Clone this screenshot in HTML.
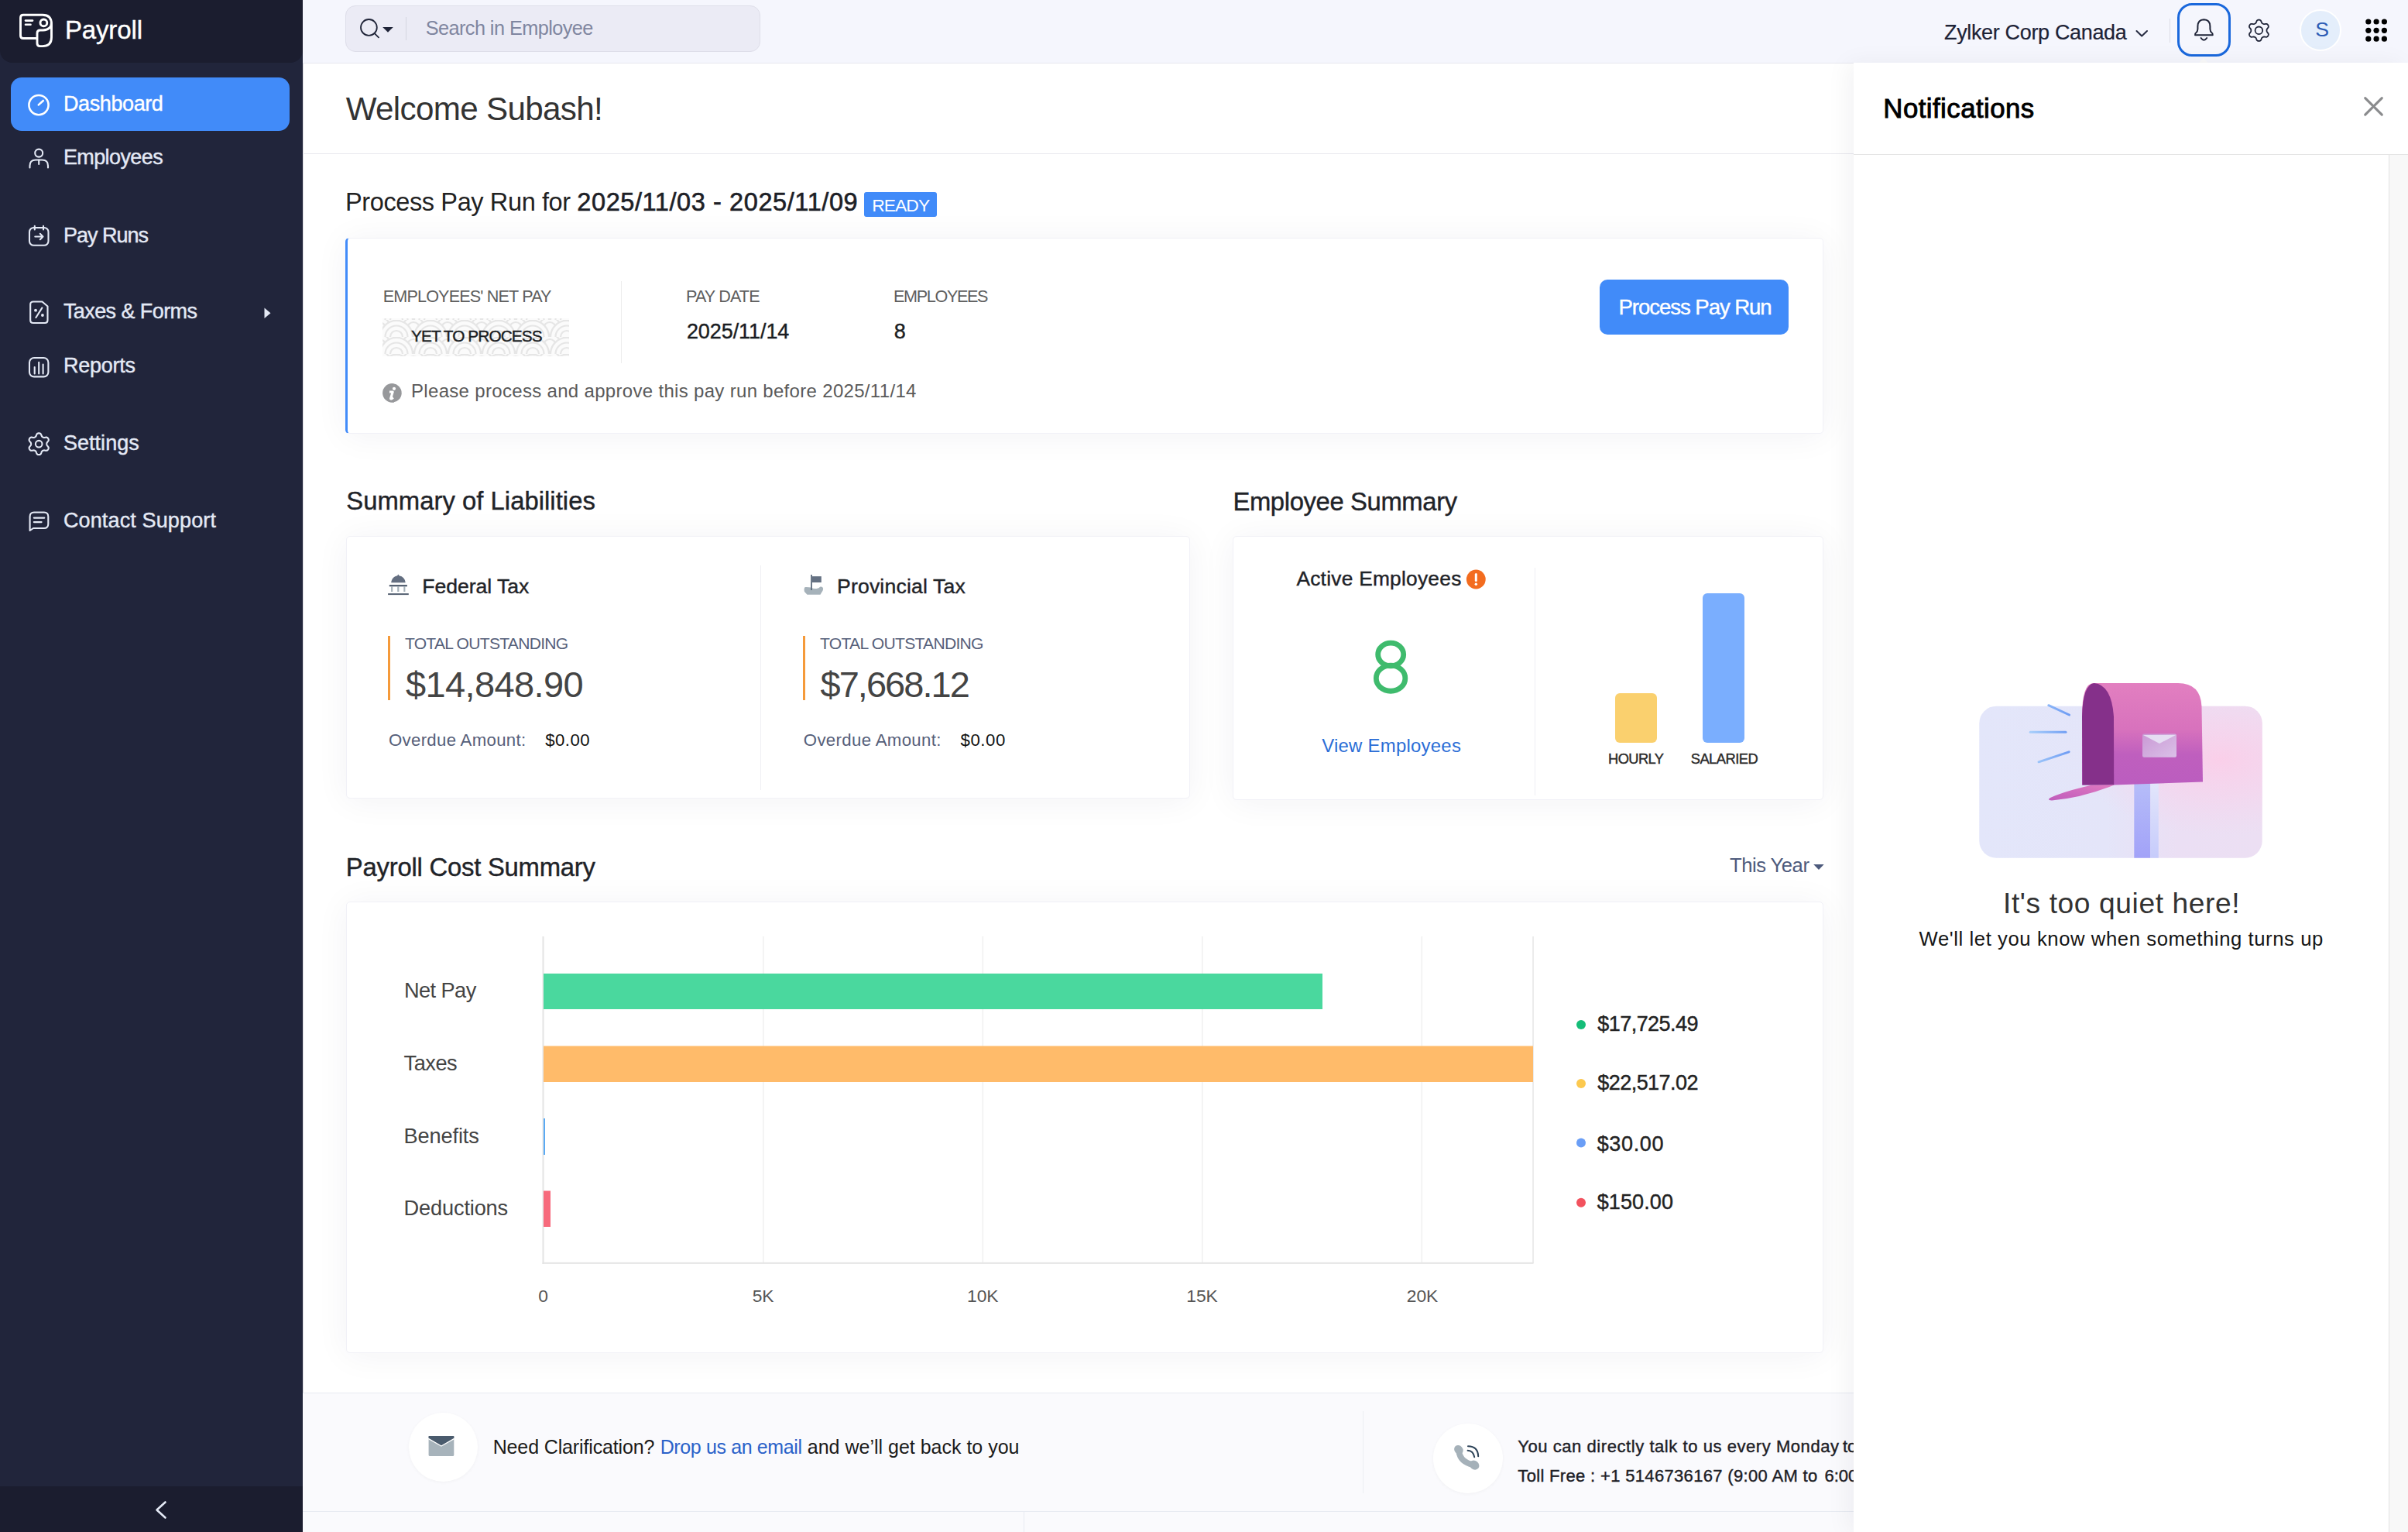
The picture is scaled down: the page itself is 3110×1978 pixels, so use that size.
<!DOCTYPE html>
<html><head><meta charset="utf-8"><title>Payroll Dashboard</title>
<style>
html,body{margin:0;padding:0;}
body{width:3110px;height:1978px;overflow:hidden;background:#ffffff;font-family:"Liberation Sans", sans-serif;}
#root{position:relative;width:3110px;height:1978px;overflow:hidden;}
.a{position:absolute;box-sizing:border-box;}
.t{position:absolute;white-space:nowrap;line-height:1;font-family:"Liberation Sans", sans-serif;}
svg{position:absolute;overflow:visible;}

</style></head><body>
<div id="root">
<!-- sidebar -->
<div class="a" style="left:0;top:0;width:391px;height:1978px;background:#21253b;"></div>
<div class="a" style="left:0;top:0;width:391px;height:81px;background:#1b1d2f;border-radius:0 0 16px 16px;"></div>
<div class="a" style="left:0;top:1919px;width:391px;height:59px;background:#1b1d2f;"></div>
<div class="a" style="left:14px;top:100px;width:360px;height:69px;background:#418bf9;border-radius:14px;"></div>

<div class="a" style="left:391px;top:81px;width:1px;height:1897px;background:#dcdce2;"></div>
<!-- header -->
<div class="a" style="left:391px;top:0;width:2719px;height:82px;background:#f5f6fd;border-bottom:1px solid #e7e8f0;"></div>
<div class="a" style="left:446px;top:7px;width:536px;height:60px;background:#ebebf5;border:1px solid #dedee9;border-radius:13px;"></div>
<div class="a" style="left:524px;top:22px;width:1px;height:30px;background:#d5d6e0;"></div>
<div class="a" style="left:2802px;top:24px;width:1px;height:31px;background:#dcdce6;"></div>
<div class="a" style="left:2812px;top:4px;width:69px;height:69px;border:3px solid #1a68dc;border-radius:19px;"></div>
<div class="a" style="left:2970px;top:12px;width:54px;height:54px;background:#e4eefb;border:2px solid #ffffff;border-radius:50%;"></div>

<!-- main welcome divider -->
<div class="a" style="left:391px;top:198px;width:2003px;height:1px;background:#e8e8ee;"></div>

<!-- READY badge -->
<div class="a" style="left:1116px;top:248px;width:94px;height:32px;background:#418bf9;border-radius:3px;"></div>

<!-- card 1 -->
<div class="a" style="left:446px;top:307px;width:1909px;height:253px;background:#fff;border-radius:5px;box-shadow:0 3px 44px rgba(30,40,80,0.055);border:1px solid #f1f1f7;border-left:3px solid #418bf9;"></div>
<svg style="left:494px;top:411px" width="241" height="49" viewBox="0 0 241 49">
  <defs>
    <pattern id="seig" width="44" height="22" patternUnits="userSpaceOnUse" x="-4" y="2">
      <rect width="44" height="22" fill="#fbfbfb"/>
      <g fill="#fbfbfb" stroke="#e6e6e6" stroke-width="2.2">
        <circle cx="22" cy="0" r="21"/><circle cx="22" cy="0" r="14.5"/><circle cx="22" cy="0" r="8"/>
        <circle cx="0" cy="11" r="21"/><circle cx="0" cy="11" r="14.5"/><circle cx="0" cy="11" r="8"/>
        <circle cx="44" cy="11" r="21"/><circle cx="44" cy="11" r="14.5"/><circle cx="44" cy="11" r="8"/>
        <circle cx="22" cy="22" r="21"/><circle cx="22" cy="22" r="14.5"/><circle cx="22" cy="22" r="8"/>
      </g>
    </pattern>
  </defs>
  <rect width="241" height="49" fill="url(#seig)"/>
</svg>
<div class="a" style="left:802px;top:363px;width:1px;height:106px;background:#ececec;"></div>
<div class="a" style="left:2066px;top:361px;width:244px;height:71px;background:#418bf9;border-radius:10px;"></div>

<!-- card 2 liabilities -->
<div class="a" style="left:447px;top:692px;width:1090px;height:339px;background:#fff;border-radius:5px;box-shadow:0 3px 44px rgba(30,40,80,0.055);border:1px solid #f1f1f7;"></div>
<div class="a" style="left:982px;top:730px;width:1px;height:290px;background:#efeff3;"></div>
<div class="a" style="left:501px;top:821px;width:3px;height:83px;background:#f59a3a;"></div>
<div class="a" style="left:1037px;top:821px;width:3px;height:83px;background:#f59a3a;"></div>

<!-- card 3 employee summary -->
<div class="a" style="left:1592px;top:692px;width:763px;height:341px;background:#fff;border-radius:5px;box-shadow:0 3px 44px rgba(30,40,80,0.055);border:1px solid #f1f1f7;"></div>
<div class="a" style="left:1982px;top:733px;width:1px;height:294px;background:#efeff3;"></div>
<div class="a" style="left:2086px;top:895px;width:54px;height:64px;background:#fad06e;border-radius:6px;"></div>
<div class="a" style="left:2199px;top:766px;width:54px;height:193px;background:#7aaefe;border-radius:6px;"></div>

<!-- card 4 payroll cost -->
<div class="a" style="left:447px;top:1164px;width:1908px;height:583px;background:#fff;border-radius:5px;box-shadow:0 3px 44px rgba(30,40,80,0.055);border:1px solid #f1f1f7;"></div>

<!-- footer -->
<div class="a" style="left:391px;top:1798px;width:2003px;height:180px;background:#fafafd;border-top:1px solid #e7ebf2;"></div>
<div class="a" style="left:391px;top:1951px;width:2003px;height:1px;background:#e7ebf2;"></div>
<div class="a" style="left:1322px;top:1951px;width:1px;height:27px;background:#e7ebf2;"></div>
<div class="a" style="left:1760px;top:1822px;width:1px;height:106px;background:#eceef3;"></div>
<div class="a" style="left:528px;top:1824px;width:89px;height:89px;background:#fff;border-radius:50%;box-shadow:0 1px 4px rgba(0,0,0,0.04);"></div>
<div class="a" style="left:1851px;top:1838px;width:90px;height:90px;background:#fff;border-radius:50%;box-shadow:0 1px 4px rgba(0,0,0,0.04);"></div>

<!-- chart -->
<svg style="left:0;top:0" width="3110" height="1978" viewBox="0 0 3110 1978">
  <g fill="#f0f0f0">
    <rect x="985" y="1209" width="1.5" height="422"/>
    <rect x="1268.6" y="1209" width="1.5" height="422"/>
    <rect x="1552" y="1209" width="1.5" height="422"/>
    <rect x="1835.6" y="1209" width="1.5" height="422"/>
    <rect x="1979.3" y="1209" width="1.5" height="422" fill="#e6e6e6"/>
  </g>
  <rect x="700.5" y="1209" width="2" height="423" fill="#e4e4e4"/>
  <rect x="700.5" y="1629.8" width="1280" height="2" fill="#e4e4e4"/>
  <rect x="702" y="1257" width="1006" height="46" fill="#4ad89e"/>
  <rect x="702" y="1350.5" width="1278" height="46.5" fill="#ffbb6a"/>
  <rect x="702" y="1444" width="2" height="47" fill="#5aaaf3"/>
  <rect x="702" y="1537.5" width="9" height="46.5" fill="#f76a7c"/>
  <circle cx="2042" cy="1323" r="6" fill="#15bd78"/>
  <circle cx="2042" cy="1399" r="6" fill="#fcc94f"/>
  <circle cx="2042" cy="1475.6" r="6" fill="#6a9ef6"/>
  <circle cx="2042" cy="1552.8" r="6" fill="#f2525e"/>
  <!-- This Year caret -->
  <path d="M2342.2 1116 L2355.7 1116 L2349 1123 Z" fill="#4d5a7c"/>
</svg>
<!-- icons -->
<svg style="left:0;top:0" width="3110" height="1978" viewBox="0 0 3110 1978">
 <g fill="none" stroke-linecap="round" stroke-linejoin="round">
  <!-- logo -->
  <g stroke="#ffffff" stroke-width="2.9">
    <path d="M47.5 49.5 H30 Q26.5 49.5 26.5 46 V23 Q26.5 19.3 30 19.3 H55 Q66.5 19.3 66.5 31 V48 Q66.5 59.6 55 59.6 H51.5 Q48 59.6 48 56 V43 Q48 39 52 39 H55.5 Q66.5 38.5 66.5 29"/>
    <circle cx="56.4" cy="29.4" r="4.4"/>
    <path d="M33 26.6 H42" stroke-width="2.6"/>
    <path d="M33 31.7 H39.5" stroke-width="2.6"/>
  </g>
  <!-- dashboard -->
  <g stroke="#ffffff" stroke-width="2.6">
    <circle cx="50" cy="135.6" r="12.6"/>
    <path d="M49.8 135.4 L55.8 130"/>
  </g>
  <g stroke="#e4e9f5" stroke-width="2.1">
    <!-- employees -->
    <circle cx="50.2" cy="197.6" r="5"/>
    <path d="M38.5 216.5 V214 Q38.5 206.5 46 206.5 H54.5 Q62 206.5 62 214 V216.5"/>
    <path d="M50.2 206.5 V212"/>
    <!-- pay runs -->
    <rect x="38" y="294" width="24.5" height="22.8" rx="5.5"/>
    <path d="M44.8 291.8 V296.5 M56 291.8 V296.5"/>
    <path d="M45.3 305.5 H55.5 M51.8 301.8 L55.5 305.5 L51.8 309.2"/>
    <!-- taxes & forms -->
    <path d="M43 389.5 H54.5 L61.5 395.5 V413.5 Q61.5 417 58 417 H43 Q39.2 417 39.2 413.5 V393 Q39.2 389.5 43 389.5 Z"/>
    <path d="M54.4 397.4 L46.4 410"/>
    <!-- reports -->
    <rect x="38" y="462" width="24.4" height="24.4" rx="6"/>
    <path d="M44.7 474 V482.4 M50.2 467.8 V482.4 M55.6 470.5 V482.4"/>
    <!-- settings gear -->
    <path d="M60.30 573.20 L60.31 573.64 L60.36 574.09 L60.49 574.55 L60.74 575.06 L61.19 575.64 L61.79 576.31 L62.36 577.03 L62.70 577.75 L62.79 578.41 L62.70 579.03 L62.51 579.61 L62.24 580.15 L61.90 580.66 L61.50 581.11 L61.01 581.49 L60.39 581.75 L59.60 581.81 L58.69 581.69 L57.80 581.50 L57.08 581.40 L56.52 581.43 L56.05 581.56 L55.64 581.74 L55.25 581.95 L54.87 582.18 L54.51 582.45 L54.17 582.78 L53.86 583.26 L53.58 583.93 L53.31 584.79 L52.96 585.64 L52.51 586.29 L51.98 586.71 L51.40 586.94 L50.81 587.06 L50.20 587.10 L49.59 587.06 L49.00 586.94 L48.42 586.71 L47.89 586.29 L47.44 585.64 L47.09 584.79 L46.82 583.93 L46.54 583.26 L46.23 582.78 L45.89 582.45 L45.53 582.18 L45.15 581.95 L44.76 581.74 L44.35 581.56 L43.88 581.43 L43.32 581.40 L42.60 581.50 L41.71 581.69 L40.80 581.81 L40.01 581.75 L39.39 581.49 L38.90 581.11 L38.50 580.66 L38.16 580.15 L37.89 579.61 L37.70 579.03 L37.61 578.41 L37.70 577.75 L38.04 577.03 L38.61 576.31 L39.21 575.64 L39.66 575.06 L39.91 574.55 L40.04 574.09 L40.09 573.64 L40.10 573.20 L40.09 572.76 L40.04 572.31 L39.91 571.85 L39.66 571.34 L39.21 570.76 L38.61 570.09 L38.04 569.37 L37.70 568.65 L37.61 567.99 L37.70 567.37 L37.89 566.79 L38.16 566.25 L38.50 565.74 L38.90 565.29 L39.39 564.91 L40.01 564.65 L40.80 564.59 L41.71 564.71 L42.60 564.90 L43.32 565.00 L43.88 564.97 L44.35 564.84 L44.76 564.66 L45.15 564.45 L45.53 564.22 L45.89 563.95 L46.23 563.62 L46.54 563.14 L46.82 562.47 L47.09 561.61 L47.44 560.76 L47.89 560.11 L48.42 559.69 L49.00 559.46 L49.59 559.34 L50.20 559.30 L50.81 559.34 L51.40 559.46 L51.98 559.69 L52.51 560.11 L52.96 560.76 L53.31 561.61 L53.58 562.47 L53.86 563.14 L54.17 563.62 L54.51 563.95 L54.87 564.22 L55.25 564.45 L55.64 564.66 L56.05 564.84 L56.52 564.97 L57.08 565.00 L57.80 564.90 L58.69 564.71 L59.60 564.59 L60.39 564.65 L61.01 564.91 L61.50 565.29 L61.90 565.74 L62.24 566.25 L62.51 566.79 L62.70 567.37 L62.79 567.99 L62.70 568.65 L62.36 569.37 L61.79 570.09 L61.19 570.76 L60.74 571.34 L60.49 571.85 L60.36 572.31 L60.31 572.76 Z"/>
    <circle cx="50.2" cy="573.2" r="4.3"/>
    <!-- contact support -->
    <path d="M38.6 685 V667 Q38.6 661.5 44 661.5 H57 Q62.3 661.5 62.3 667 V676.5 Q62.3 682 57 682 H43 Z"/>
    <path d="M43.8 668.6 H57.3 M43.8 674.1 H53.6"/>
  </g>
  <g fill="#e4e9f5" stroke="none">
    <circle cx="46" cy="400.7" r="1.9"/>
    <circle cx="54.9" cy="407" r="1.9"/>
    <path d="M341.5 397.5 L349.5 404.2 L341.5 411 Z"/>
  </g>
  <!-- sidebar collapse chevron -->
  <path d="M213.5 1939.5 L202.5 1949.5 L213.5 1959.5" stroke="#e4e9f5" stroke-width="2.6"/>

  <!-- search -->
  <g stroke="#1f2438" stroke-width="1.8">
    <circle cx="476.4" cy="35.4" r="10.4"/>
    <path d="M484 43.3 L489 48.3"/>
  </g>
  <path d="M494.2 35 H507.8 L501 41.8 Z" fill="#1f2438"/>
  <!-- company chevron -->
  <path d="M2759.5 40 L2766.2 46.5 L2773 40" stroke="#252a40" stroke-width="2"/>
  <path d="M2839 82.2 L2846 75.3 L2853 82.2 Z" fill="#fafafa" stroke="none"/>
  <!-- bell -->
  <g stroke="#1f2438" stroke-width="2">
    <path d="M2835 45.2 Q2834.5 43.5 2836.5 42 Q2838.2 40.6 2838.4 37.5 V34 Q2838.6 25.5 2846.4 25.3 Q2854.2 25.5 2854.4 34 V37.5 Q2854.6 40.6 2856.3 42 Q2858.3 43.5 2857.8 45.2 Z"/>
    <path d="M2842.6 49 Q2846.4 54.5 2850.2 49"/>
  </g>
  <!-- gear header -->
  <g stroke="#1f2438" stroke-width="1.8">
    <path d="M2927.50 39.30 L2927.51 39.74 L2927.56 40.19 L2927.67 40.65 L2927.91 41.15 L2928.33 41.72 L2928.89 42.38 L2929.42 43.09 L2929.74 43.79 L2929.82 44.44 L2929.73 45.05 L2929.53 45.62 L2929.26 46.15 L2928.94 46.65 L2928.54 47.10 L2928.06 47.48 L2927.46 47.74 L2926.69 47.82 L2925.81 47.71 L2924.96 47.55 L2924.26 47.47 L2923.71 47.52 L2923.25 47.65 L2922.84 47.84 L2922.45 48.05 L2922.07 48.28 L2921.71 48.54 L2921.36 48.87 L2921.05 49.33 L2920.77 49.98 L2920.48 50.79 L2920.13 51.61 L2919.68 52.23 L2919.15 52.62 L2918.59 52.85 L2918.00 52.97 L2917.40 53.00 L2916.80 52.97 L2916.21 52.85 L2915.65 52.62 L2915.12 52.23 L2914.67 51.61 L2914.32 50.79 L2914.03 49.98 L2913.75 49.33 L2913.44 48.87 L2913.09 48.54 L2912.73 48.28 L2912.35 48.05 L2911.96 47.84 L2911.55 47.65 L2911.09 47.52 L2910.54 47.47 L2909.84 47.55 L2908.99 47.71 L2908.11 47.82 L2907.34 47.74 L2906.74 47.48 L2906.26 47.10 L2905.86 46.65 L2905.54 46.15 L2905.27 45.62 L2905.07 45.05 L2904.98 44.44 L2905.06 43.79 L2905.38 43.09 L2905.91 42.38 L2906.47 41.72 L2906.89 41.15 L2907.13 40.65 L2907.24 40.19 L2907.29 39.74 L2907.30 39.30 L2907.29 38.86 L2907.24 38.41 L2907.13 37.95 L2906.89 37.45 L2906.47 36.88 L2905.91 36.22 L2905.38 35.51 L2905.06 34.81 L2904.98 34.16 L2905.07 33.55 L2905.27 32.98 L2905.54 32.45 L2905.86 31.95 L2906.26 31.50 L2906.74 31.12 L2907.34 30.86 L2908.11 30.78 L2908.99 30.89 L2909.84 31.05 L2910.54 31.13 L2911.09 31.08 L2911.55 30.95 L2911.96 30.76 L2912.35 30.55 L2912.73 30.32 L2913.09 30.06 L2913.44 29.73 L2913.75 29.27 L2914.03 28.62 L2914.32 27.81 L2914.67 26.99 L2915.12 26.37 L2915.65 25.98 L2916.21 25.75 L2916.80 25.63 L2917.40 25.60 L2918.00 25.63 L2918.59 25.75 L2919.15 25.98 L2919.68 26.37 L2920.13 26.99 L2920.48 27.81 L2920.77 28.62 L2921.05 29.27 L2921.36 29.73 L2921.71 30.06 L2922.07 30.32 L2922.45 30.55 L2922.84 30.76 L2923.25 30.95 L2923.71 31.08 L2924.26 31.13 L2924.96 31.05 L2925.81 30.89 L2926.69 30.78 L2927.46 30.86 L2928.06 31.12 L2928.54 31.50 L2928.94 31.95 L2929.26 32.45 L2929.53 32.98 L2929.73 33.55 L2929.82 34.16 L2929.74 34.81 L2929.42 35.51 L2928.89 36.22 L2928.33 36.88 L2927.91 37.45 L2927.67 37.95 L2927.56 38.41 L2927.51 38.86 Z"/>
    <circle cx="2917.4" cy="39.3" r="4.8"/>
  </g>
  <!-- grid -->
  <g fill="#000" stroke="none">
    <circle cx="3058.8" cy="28" r="3.6"/><circle cx="3069.1" cy="28" r="3.6"/><circle cx="3079.4" cy="28" r="3.6"/>
    <circle cx="3058.8" cy="39.3" r="3.6"/><circle cx="3069.1" cy="39.3" r="3.6"/><circle cx="3079.4" cy="39.3" r="3.6"/>
    <circle cx="3058.8" cy="50.2" r="3.6"/><circle cx="3069.1" cy="50.2" r="3.6"/><circle cx="3079.4" cy="50.2" r="3.6"/>
  </g>

  <!-- info icon -->
  <circle cx="506.4" cy="507.4" r="12.3" fill="#97989b" stroke="none"/>
  <circle cx="509" cy="501.8" r="2.1" fill="#fff" stroke="none"/>
  <path d="M503 506 H507.2 L504.6 514.5 Q504.6 515.4 506 514.6 L508 513.5" stroke="#fff" stroke-width="3.1" stroke-linecap="butt"/>

  <!-- federal tax -->
  <g stroke="none">
    <path d="M505.2 752.2 Q506 744.8 513.2 743.3 L514.3 741.6 L515.5 743.3 Q522.8 744.8 523.7 752.2 Z" fill="#636e80"/>
    <rect x="502.8" y="755" width="23.1" height="2.3" fill="#566273"/>
    <rect x="505.1" y="757.2" width="2.1" height="6.8" fill="#a5b1b9"/>
    <rect x="513.2" y="757.2" width="2.2" height="6.8" fill="#a5b1b9"/>
    <rect x="521.3" y="757.2" width="2.1" height="6.8" fill="#a5b1b9"/>
    <rect x="501.1" y="766.1" width="26.7" height="2" fill="#566273"/>
  </g>
  <!-- provincial tax -->
  <g stroke="none">
    <path d="M1039 759 Q1039 757.8 1041 757.9 Q1045 758 1047 758.5 Q1051 760.5 1054.5 760 Q1057.5 759.5 1059.5 757.5 Q1062.5 757 1063 759.5 Q1063.4 762 1061.7 764 L1059.5 767.8 H1042.5 L1039 764 Q1038.2 761.5 1039 759 Z" fill="#a6b2ba"/>
    <rect x="1047.1" y="742" width="1.8" height="20" fill="#5d6a7c"/>
    <rect x="1048.8" y="744.1" width="12" height="7.9" fill="#647082"/>
  </g>
  <!-- active employees ! -->
  <circle cx="1906.3" cy="748" r="12.4" fill="#f36c1f" stroke="none"/>
  <path d="M1906.3 741.5 V749.5" stroke="#fff" stroke-width="3"/>
  <circle cx="1906.3" cy="754.3" r="1.7" fill="#fff" stroke="none"/>
  <!-- big 8 -->
  <g stroke="#3fbb6d" stroke-width="6.8">
    <ellipse cx="1796.2" cy="845" rx="16.5" ry="14.85"/>
    <ellipse cx="1796.1" cy="875.7" rx="18.75" ry="16.55"/>
  </g>

  <!-- footer mail -->
  <g stroke="none">
    <rect x="553.6" y="1854" width="32.7" height="26" rx="1.5" fill="#a7b3bb"/>
    <path d="M553.6 1854 H586.3 V1857.5 L569.95 1867 L553.6 1857.5 Z" fill="#4a5b6d"/>
    <path d="M553.6 1857.6 L569.95 1867 L586.3 1857.6" stroke="#fff" stroke-width="1.3" fill="none"/>
  </g>
  <!-- footer phone -->
  <path d="M1884.2 1874 Q1886 1887.5 1902.5 1891.2" stroke="#a5b1b9" stroke-width="7.6" stroke-linecap="round"/>
  <ellipse cx="1883.9" cy="1871.9" rx="5.4" ry="6.3" transform="rotate(-40 1883.9 1871.9)" fill="#a5b1b9" stroke="none"/>
  <ellipse cx="1904.2" cy="1891.6" rx="5.6" ry="6.6" transform="rotate(-50 1904.2 1891.6)" fill="#a5b1b9" stroke="none"/>
  <path d="M1895.6 1872.8 Q1902.8 1873.2 1904.2 1881.2" stroke="#2d4358" stroke-width="2"/>
  <path d="M1896 1867.3 Q1908.8 1867.5 1909.2 1880.2" stroke="#2d4358" stroke-width="2"/>
 </g>
</svg>
<!-- notification panel on top -->
<div class="a" style="left:2394px;top:81px;width:716px;height:1897px;background:#fff;box-shadow:-8px 0 28px rgba(20,20,40,0.05);z-index:5;"></div>
<div class="a" style="left:2394px;top:199px;width:716px;height:1px;background:#e4e4e4;z-index:5;"></div>
<div class="a" style="left:3085px;top:200px;width:25px;height:1778px;background:#f8f8f8;border-left:1px solid #e2e2e2;z-index:5;"></div>
<svg style="left:0;top:0;z-index:6" width="3110" height="1978" viewBox="0 0 3110 1978">
  <defs>
    <linearGradient id="bgg" x1="0" y1="0" x2="1" y2="0">
      <stop offset="0" stop-color="#e3e6fa"/>
      <stop offset="0.45" stop-color="#e4e5f9"/>
      <stop offset="0.7" stop-color="#ebdff4"/>
      <stop offset="1" stop-color="#ecdff3"/>
    </linearGradient>
    <radialGradient id="bgr" cx="0.85" cy="0.35" r="0.5">
      <stop offset="0" stop-color="#facfe9" stop-opacity="1"/>
      <stop offset="0.5" stop-color="#f7d3ec" stop-opacity="0.6"/>
      <stop offset="1" stop-color="#f4d6ee" stop-opacity="0"/>
    </radialGradient>
    <linearGradient id="boxg" x1="0" y1="0" x2="0" y2="1">
      <stop offset="0" stop-color="#e27fc0"/>
      <stop offset="0.45" stop-color="#d872bd"/>
      <stop offset="0.7" stop-color="#bf5fbe"/>
      <stop offset="1" stop-color="#bb5dbf"/>
    </linearGradient>
    <linearGradient id="lidg" x1="0" y1="1" x2="1" y2="0">
      <stop offset="0" stop-color="#bf5cbc"/>
      <stop offset="1" stop-color="#e07ac0"/>
    </linearGradient>
    <linearGradient id="postg" x1="0" y1="0" x2="0" y2="1">
      <stop offset="0" stop-color="#b6bdf9"/>
      <stop offset="1" stop-color="#a2a2f8"/>
    </linearGradient>
    <linearGradient id="lineg" gradientUnits="userSpaceOnUse" x1="2620" y1="0" x2="2673" y2="0">
      <stop offset="0" stop-color="#a9d0fb"/>
      <stop offset="1" stop-color="#6d9bf3"/>
    </linearGradient>
    <linearGradient id="post2" x1="0" y1="0" x2="0" y2="1">
      <stop offset="0" stop-color="#e3e6fb"/>
      <stop offset="1" stop-color="#c6cbfb"/>
    </linearGradient>
    <linearGradient id="envg" x1="0" y1="0" x2="1" y2="1">
      <stop offset="0" stop-color="#c99bd6"/>
      <stop offset="1" stop-color="#dcc6ea"/>
    </linearGradient>
  </defs>
  <path d="M3054.7 126.7 L3076.3 148.2 M3076.3 126.7 L3054.7 148.2" stroke="#8a8b8d" stroke-width="3.1" stroke-linecap="round"/>
  <rect x="2556.3" y="911.7" width="365.4" height="196" rx="22" fill="url(#bgg)"/>
  <rect x="2556.3" y="911.7" width="365.4" height="196" rx="22" fill="url(#bgr)"/>
  <!-- sound lines -->
  <g stroke="url(#lineg)" stroke-width="3" stroke-linecap="round" fill="none">
    <path d="M2645.8 910.7 L2672.5 923"/>
    <path d="M2622.2 945.2 L2668 945.2"/>
    <path d="M2633 983.8 L2672 970.8"/>
  </g>
  <!-- post -->
  <rect x="2756.3" y="1010" width="21" height="97.7" fill="url(#postg)"/>
  <rect x="2777.3" y="1010" width="10.5" height="97.7" fill="url(#post2)"/>
  <!-- mailbox body -->
  <path d="M2704 882 H2813 Q2842 882 2843.5 912 L2845 1009.5 L2730 1013.5 L2689 1013.5 V925 Q2689 882 2704 882 Z" fill="url(#boxg)"/>
  <!-- opening -->
  <path d="M2704.5 882 Q2690 884 2689 925 L2689.5 1013.5 L2730.2 1013.5 L2730 925 Q2727 884 2704.5 882 Z" fill="#85308a"/>
  <!-- lid -->
  <path d="M2648 1030 Q2643 1033 2650 1033.5 Q2690 1030 2730.5 1013.5 L2700 1014 Q2665 1022 2648 1030 Z" fill="url(#lidg)"/>
  <!-- envelope -->
  <rect x="2767" y="947.6" width="44" height="30.2" rx="2" fill="url(#envg)" opacity="0.95"/>
  <path d="M2768 949 L2789 960 L2810 949 Z" fill="#e8e3f5" opacity="0.9"/>
</svg>

<div class="t" id="t0" style="top:21.9px;font-size:33px;color:#ffffff;-webkit-text-stroke:0.4px #ffffff;letter-spacing:-0.128px;left:83.9px;">Payroll</div>
<div class="t" id="t1" style="top:121.1px;font-size:27px;color:#ffffff;-webkit-text-stroke:0.4px #ffffff;letter-spacing:-0.386px;left:81.9px;">Dashboard</div>
<div class="t" id="t2" style="top:190.3px;font-size:27px;color:#e4e9f5;-webkit-text-stroke:0.4px #e4e9f5;letter-spacing:-0.595px;left:81.9px;">Employees</div>
<div class="t" id="t3" style="top:290.6px;font-size:27px;color:#e4e9f5;-webkit-text-stroke:0.4px #e4e9f5;letter-spacing:-0.993px;left:81.9px;">Pay Runs</div>
<div class="t" id="t4" style="top:389.1px;font-size:27px;color:#e4e9f5;-webkit-text-stroke:0.4px #e4e9f5;letter-spacing:-0.579px;left:81.9px;">Taxes &amp; Forms</div>
<div class="t" id="t5" style="top:459.4px;font-size:27px;color:#e4e9f5;-webkit-text-stroke:0.4px #e4e9f5;letter-spacing:-0.218px;left:81.9px;">Reports</div>
<div class="t" id="t6" style="top:558.9px;font-size:27px;color:#e4e9f5;-webkit-text-stroke:0.4px #e4e9f5;letter-spacing:0.045px;left:81.9px;">Settings</div>
<div class="t" id="t7" style="top:659.0px;font-size:27px;color:#e4e9f5;-webkit-text-stroke:0.4px #e4e9f5;letter-spacing:0.140px;left:81.9px;">Contact Support</div>
<div class="t" id="t8" style="top:23.5px;font-size:25.3px;color:#7f86a0;letter-spacing:-0.571px;left:549.7px;">Search in Employee</div>
<div class="t" id="t9" style="top:29.1px;font-size:27px;color:#1d2236;letter-spacing:-0.344px;left:2511.0px;-webkit-text-stroke:0.2px #1d2236;">Zylker Corp Canada</div>
<div class="t" id="t10" style="top:25.4px;font-size:26.6px;color:#2c5cb5;letter-spacing:-2.454px;left:2990.3px;">S</div>
<div class="t" id="t11" style="top:120.0px;font-size:42.2px;color:#333333;letter-spacing:-0.677px;left:446.7px;">Welcome Subash!</div>
<div class="t" id="t12" style="top:245.2px;font-size:32.5px;color:#222;letter-spacing:-0.384px;left:446.0px;">Process Pay Run for</div>
<div class="t" id="t13" style="top:245.2px;font-size:32.5px;color:#1d2026;-webkit-text-stroke:0.4px #1d2026;letter-spacing:0.590px;left:745.3px;-webkit-text-stroke:0.6px #1d2026;">2025/11/03 - 2025/11/09</div>
<div class="t" id="t14" style="top:253.6px;font-size:22.8px;color:#ffffff;letter-spacing:-0.896px;left:1126.2px;">READY</div>
<div class="t" id="t15" style="top:372.2px;font-size:21.6px;color:#5e5e5e;letter-spacing:-0.841px;left:494.7px;">EMPLOYEES' NET PAY</div>
<div class="t" id="t16" style="top:424.4px;font-size:20.8px;color:#1a1d22;-webkit-text-stroke:0.4px #1a1d22;letter-spacing:-0.916px;left:531.0px;">YET TO PROCESS</div>
<div class="t" id="t17" style="top:372.2px;font-size:21.6px;color:#5e5e5e;letter-spacing:-0.864px;left:886.0px;">PAY DATE</div>
<div class="t" id="t18" style="top:415.1px;font-size:27px;color:#1a1d22;-webkit-text-stroke:0.4px #1a1d22;letter-spacing:-0.072px;left:886.9px;">2025/11/14</div>
<div class="t" id="t19" style="top:372.2px;font-size:21.6px;color:#5e5e5e;letter-spacing:-1.336px;left:1154.0px;">EMPLOYEES</div>
<div class="t" id="t20" style="top:415.1px;font-size:27px;color:#1a1d22;-webkit-text-stroke:0.4px #1a1d22;letter-spacing:-0.111px;left:1154.7px;">8</div>
<div class="t" id="t21" style="top:493.3px;font-size:24px;color:#5a5a5a;letter-spacing:0.317px;left:531.0px;">Please process and approve this pay run before 2025/11/14</div>
<div class="t" id="t22" style="top:382.7px;font-size:27.6px;color:#ffffff;-webkit-text-stroke:0.4px #ffffff;letter-spacing:-1.069px;left:2090.5px;">Process Pay Run</div>
<div class="t" id="t23" style="top:631.1px;font-size:32.8px;color:#1f2328;-webkit-text-stroke:0.4px #1f2328;letter-spacing:0.035px;left:447.3px;">Summary of Liabilities</div>
<div class="t" id="t24" style="top:744.4px;font-size:26.6px;color:#1f2328;-webkit-text-stroke:0.4px #1f2328;letter-spacing:-0.034px;left:545.2px;">Federal Tax</div>
<div class="t" id="t25" style="top:820.0px;font-size:21.1px;color:#56607a;letter-spacing:-0.735px;left:522.9px;">TOTAL OUTSTANDING</div>
<div class="t" id="t26" style="top:860.4px;font-size:47px;color:#444444;letter-spacing:-0.621px;left:524.0px;">$14,848.90</div>
<div class="t" id="t27" style="top:945.0px;font-size:22.2px;color:#56607a;letter-spacing:0.317px;left:502.0px;">Overdue Amount:</div>
<div class="t" id="t28" style="top:945.0px;font-size:22.2px;color:#111;letter-spacing:0.440px;left:704.3px;">$0.00</div>
<div class="t" id="t29" style="top:744.4px;font-size:26.6px;color:#1f2328;-webkit-text-stroke:0.4px #1f2328;letter-spacing:0.173px;left:1081.0px;">Provincial Tax</div>
<div class="t" id="t30" style="top:820.0px;font-size:21.1px;color:#56607a;letter-spacing:-0.723px;left:1059.0px;">TOTAL OUTSTANDING</div>
<div class="t" id="t31" style="top:860.4px;font-size:47px;color:#444444;letter-spacing:-1.975px;left:1059.5px;">$7,668.12</div>
<div class="t" id="t32" style="top:945.0px;font-size:22.2px;color:#56607a;letter-spacing:0.351px;left:1037.8px;">Overdue Amount:</div>
<div class="t" id="t33" style="top:945.0px;font-size:22.2px;color:#111;letter-spacing:0.560px;left:1240.5px;">$0.00</div>
<div class="t" id="t34" style="top:631.7px;font-size:32.8px;color:#1f2328;-webkit-text-stroke:0.4px #1f2328;letter-spacing:-0.370px;left:1592.4px;">Employee Summary</div>
<div class="t" id="t35" style="top:734.4px;font-size:26.3px;color:#1f2328;-webkit-text-stroke:0.4px #1f2328;letter-spacing:0.260px;left:1674.4px;">Active Employees</div>
<div class="t" id="t36" style="top:951.2px;font-size:23.9px;color:#2b6dd6;letter-spacing:0.269px;left:1707.2px;">View Employees</div>
<div class="t" id="t37" style="top:970.5px;font-size:18.3px;color:#2a2a2a;-webkit-text-stroke:0.4px #2a2a2a;letter-spacing:-0.558px;left:2077.0px;">HOURLY</div>
<div class="t" id="t38" style="top:970.5px;font-size:18.3px;color:#2a2a2a;-webkit-text-stroke:0.4px #2a2a2a;letter-spacing:-0.480px;left:2183.7px;">SALARIED</div>
<div class="t" id="t39" style="top:1103.9px;font-size:32.8px;color:#1f2328;-webkit-text-stroke:0.4px #1f2328;letter-spacing:-0.213px;left:446.8px;">Payroll Cost Summary</div>
<div class="t" id="t40" style="top:1105.2px;font-size:25.6px;color:#4d5a7c;letter-spacing:-0.476px;left:2234.0px;">This Year</div>
<div class="t" id="t41" style="top:1264.9px;font-size:27.2px;color:#444;letter-spacing:-0.555px;left:521.9px;">Net Pay</div>
<div class="t" id="t42" style="top:1359.0px;font-size:27.2px;color:#444;letter-spacing:-0.480px;left:521.6px;">Taxes</div>
<div class="t" id="t43" style="top:1452.7px;font-size:27.2px;color:#444;letter-spacing:-0.140px;left:521.6px;">Benefits</div>
<div class="t" id="t44" style="top:1546.4px;font-size:27.2px;color:#444;letter-spacing:-0.160px;left:521.6px;">Deductions</div>
<div class="t" id="t45" style="top:1662.4px;font-size:22.8px;color:#555;left:701.5px;transform:translateX(-50%);">0</div>
<div class="t" id="t46" style="top:1662.4px;font-size:22.8px;color:#555;left:985.6px;transform:translateX(-50%);">5K</div>
<div class="t" id="t47" style="top:1662.4px;font-size:22.8px;color:#555;left:1269.3px;transform:translateX(-50%);">10K</div>
<div class="t" id="t48" style="top:1662.4px;font-size:22.8px;color:#555;left:1552.5px;transform:translateX(-50%);">15K</div>
<div class="t" id="t49" style="top:1662.4px;font-size:22.8px;color:#555;left:1837.0px;transform:translateX(-50%);">20K</div>
<div class="t" id="t50" style="top:1309.1px;font-size:27px;color:#222;-webkit-text-stroke:0.4px #222;letter-spacing:-0.552px;left:2063.3px;">$17,725.49</div>
<div class="t" id="t51" style="top:1385.2px;font-size:27px;color:#222;-webkit-text-stroke:0.4px #222;letter-spacing:-0.552px;left:2063.3px;">$22,517.02</div>
<div class="t" id="t52" style="top:1463.5px;font-size:27px;color:#222;-webkit-text-stroke:0.4px #222;letter-spacing:0.638px;left:2062.7px;">$30.00</div>
<div class="t" id="t53" style="top:1539.1px;font-size:27px;color:#222;-webkit-text-stroke:0.4px #222;letter-spacing:0.102px;left:2062.7px;">$150.00</div>
<div class="t" id="t54" style="top:1856.1px;font-size:25px;color:#1a1a1a;letter-spacing:-0.138px;left:636.7px;">Need Clarification?</div>
<div class="t" id="t55" style="top:1856.1px;font-size:25px;color:#2a62c9;letter-spacing:-0.380px;left:852.7px;">Drop us an email</div>
<div class="t" id="t56" style="top:1856.1px;font-size:25px;color:#1a1a1a;letter-spacing:-0.003px;left:1042.8px;">and we’ll get back to you</div>
<div class="t" id="t57" style="top:1857.0px;font-size:22px;color:#1d2026;-webkit-text-stroke:0.4px #1d2026;letter-spacing:0.557px;left:1960.3px;">You can directly talk to us every Monday</div>
<div class="t" id="t58" style="top:1857.0px;font-size:22px;color:#1d2026;-webkit-text-stroke:0.4px #1d2026;left:2380.0px;"> to Friday</div>
<div class="t" id="t59" style="top:1894.9px;font-size:22px;color:#1d2026;-webkit-text-stroke:0.4px #1d2026;letter-spacing:0.334px;left:1960.3px;">Toll Free : +1 5146736167 (9:00 AM to</div>
<div class="t" id="t60" style="top:1894.9px;font-size:22px;color:#1d2026;-webkit-text-stroke:0.4px #1d2026;left:2356.5px;">6:00 PM)</div>
<div class="t" id="t61" style="top:122.5px;font-size:34.8px;color:#000;letter-spacing:0.451px;left:2432.3px;z-index:7;-webkit-text-stroke:0.9px #000;">Notifications</div>
<div class="t" id="t62" style="top:1148.3px;font-size:37.2px;color:#333;letter-spacing:0.589px;left:2587.0px;z-index:7;">It's too quiet here!</div>
<div class="t" id="t63" style="top:1199.9px;font-size:25.7px;color:#151515;letter-spacing:0.568px;left:2478.6px;z-index:7;">We'll let you know when something turns up</div>
</div>
</body></html>
